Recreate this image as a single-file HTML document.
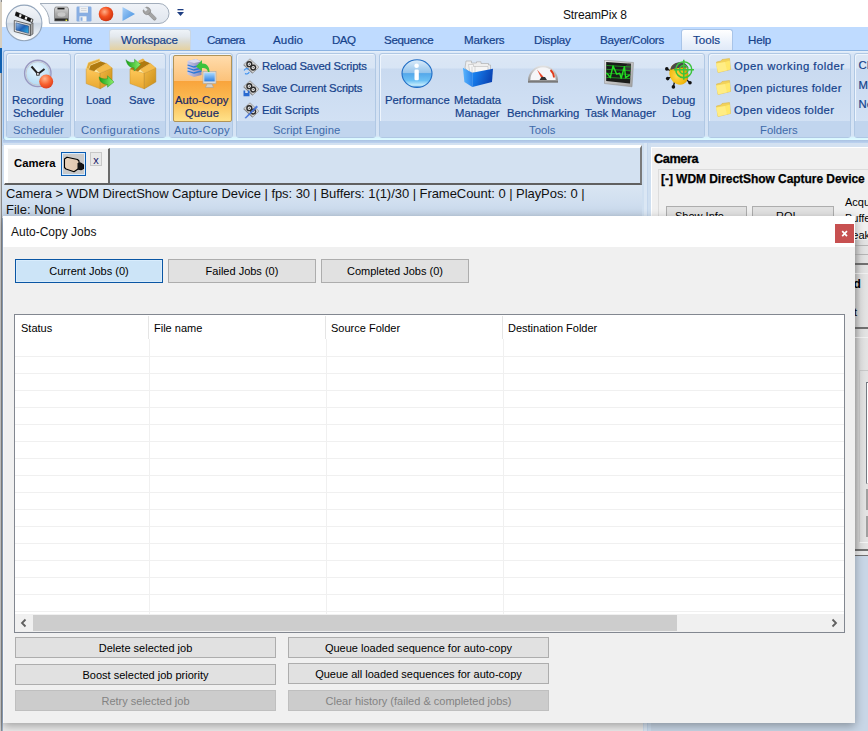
<!DOCTYPE html>
<html><head><meta charset="utf-8">
<style>
*{margin:0;padding:0;box-sizing:border-box}
html,body{width:868px;height:731px;overflow:hidden;background:#c8d6e6;font-family:"Liberation Sans",sans-serif}
.a{position:absolute}
.t{position:absolute;white-space:nowrap;line-height:1}
.rb{color:#15428b}
.tab{font-size:11.6px;color:#15428b;-webkit-text-stroke:0.2px #15428b}
.grp{position:absolute;top:53px;height:85px;border:1px solid #b0c8e4;border-radius:3px;background:linear-gradient(#dce7f5 0,#d8e5f5 14px,#c9daf0 15px,#d2e1f4 68px);box-shadow:inset 1px 1px 0 #eef5fd}
.grp .lb{position:absolute;left:0;right:0;bottom:0;height:16px;background:#c1d5ee}
.gl{position:absolute;font-size:11.3px;color:#3e6aaa;white-space:nowrap;line-height:1}
.bt{position:absolute;font-size:11.3px;color:#15428b;white-space:nowrap;line-height:1;-webkit-text-stroke:0.2px #15428b}
.btn{position:absolute;height:21px;border:1px solid #adadad;background:#e1e1e1;font-size:11px;color:#000;text-align:center;line-height:21px;white-space:nowrap}
.dis{border-color:#bfbfbf;background:#cccccc;color:#838383}
</style></head><body>
<!-- left strip behind -->
<div class="a" style="left:0;top:0;width:2px;height:731px;background:#cfcfcf;border-right:1px solid #8a8a8a"></div>
<div class="a" style="left:0;top:2px;width:2px;height:46px;background:#d8cfc0"></div>
<div class="a" style="left:0;top:48px;width:2px;height:25px;background:#1060b0"></div>
<div class="a" style="left:2px;top:27px;width:1px;height:704px;background:#c0d8f4"></div>
<div class="a" style="left:2px;top:217px;width:1px;height:514px;background:#9ab0cc"></div>

<!-- title bar -->
<div class="a" style="left:2px;top:0;width:866px;height:27px;background:#fff"></div>
<!-- tab row -->
<div class="a" style="left:2px;top:27px;width:866px;height:24px;background:#bfdbff"></div>


<!-- QAT -->
<svg class="a" style="left:36px;top:2px" width="140" height="24">
  <defs><linearGradient id="qg" x1="0" y1="0" x2="0" y2="1"><stop offset="0" stop-color="#f0f3f8"/><stop offset="1" stop-color="#e0e6ee"/></linearGradient></defs>
  <path d="M4,1.5 H123 A10,10 0 0 1 123,21.5 H13.5 A25.2,25.2 0 0 0 4,1.5 Z" fill="url(#qg)" stroke="#a2adbb" stroke-width="1"/>
</svg>
<!-- hdd icon -->
<svg class="a" style="left:54px;top:6px" width="16" height="16">
  <defs><linearGradient id="hdg" x1="0" y1="0" x2="0" y2="1"><stop offset="0" stop-color="#d8d8d8"/><stop offset="0.5" stop-color="#a8a8a8"/><stop offset="1" stop-color="#8c8c8c"/></linearGradient></defs>
  <path d="M1.5,1 H13.5 L14.5,3 V15 H0.5 V3 Z" fill="url(#hdg)" stroke="#6a6a6a" stroke-width="0.6"/>
  <rect x="3.5" y="1.8" width="7" height="1.6" fill="#222"/>
  <ellipse cx="7.5" cy="8.5" rx="4" ry="2.2" fill="#c8c8c8"/>
  <rect x="1" y="12.5" width="13" height="2.2" fill="#2a2a2a"/>
  <rect x="11.5" y="13.6" width="1.6" height="1.4" fill="#f0f040"/>
</svg>
<!-- floppy -->
<svg class="a" style="left:76px;top:6px" width="16" height="16">
  <rect x="0.5" y="0.5" width="15" height="15" rx="1.2" fill="#88aee2"/>
  <rect x="3.5" y="0.5" width="8.5" height="6.2" fill="#eef0f2"/>
  <path d="M5,2.5 H10.5 M5,4.5 H10.5" stroke="#c8ccd2" stroke-width="0.7"/>
  <rect x="3.5" y="10.3" width="7" height="5.2" fill="#f4f4f4"/>
  <rect x="4.5" y="11.3" width="2" height="3.5" fill="#88aee2"/>
</svg>
<!-- record -->
<svg class="a" style="left:98px;top:6px" width="16" height="16">
  <defs><radialGradient id="rg" cx="0.4" cy="0.35" r="0.7"><stop offset="0" stop-color="#ffb08a"/><stop offset="0.5" stop-color="#f3501f"/><stop offset="1" stop-color="#c9300e"/></radialGradient></defs>
  <circle cx="8" cy="8" r="7.3" fill="url(#rg)"/>
</svg>
<!-- play -->
<svg class="a" style="left:121px;top:6px" width="16" height="16">
  <defs><linearGradient id="plg" x1="0" y1="0" x2="1" y2="1"><stop offset="0" stop-color="#a8d0f8"/><stop offset="1" stop-color="#3f8ee0"/></linearGradient></defs>
  <path d="M1.5,1 L14,8 L1.5,15 Z" fill="url(#plg)"/>
</svg>
<!-- wrench -->
<svg class="a" style="left:142px;top:6px" width="16" height="16">
  <g transform="rotate(45 8 8)">
    <rect x="4.5" y="6.4" width="11.5" height="3.2" rx="1.6" fill="#a4a4a4" stroke="#7c7c7c" stroke-width="0.5"/>
    <circle cx="3.6" cy="8" r="3.7" fill="#a4a4a4" stroke="#7c7c7c" stroke-width="0.5"/>
    <rect x="-1" y="6.6" width="4.2" height="2.8" fill="#e6ebf1"/>
  </g>
</svg>
<!-- dropdown arrow -->
<svg class="a" style="left:177px;top:9px" width="8" height="9">
  <rect x="0.5" y="0" width="6" height="1.3" fill="#1e3e82"/>
  <path d="M0,3 H7 L3.5,7 Z" fill="#1e3e82"/>
</svg>
<!-- orb -->
<svg class="a" style="left:4px;top:3px" width="42" height="42">
  <defs>
    <linearGradient id="og" x1="0" y1="0" x2="0" y2="1"><stop offset="0" stop-color="#f6f8fb"/><stop offset="0.48" stop-color="#dfe6ee"/><stop offset="0.52" stop-color="#ccd6e2"/><stop offset="0.8" stop-color="#e8eef4"/><stop offset="1" stop-color="#ffffff"/></linearGradient>
    <linearGradient id="scr" x1="0" y1="0" x2="1" y2="1"><stop offset="0" stop-color="#a0c4ec"/><stop offset="0.5" stop-color="#1f5fb4"/><stop offset="1" stop-color="#30b8e8"/></linearGradient>
    <linearGradient id="cbody" x1="0" y1="0" x2="1" y2="0"><stop offset="0" stop-color="#f4f4f4"/><stop offset="1" stop-color="#c8c8c8"/></linearGradient>
  </defs>
  <circle cx="20.1" cy="19.9" r="17.8" fill="url(#og)" stroke="#94a6bc" stroke-width="1.1"/>
  <path d="M12.2,8.9 L29,16.5 L28.1,19.5 L11.3,12.5 Z" fill="#f0f0f0" stroke="#222" stroke-width="0.8"/>
  <path d="M12.2,8.9 L15.8,10.5 L14.8,14 L11.3,12.5 Z M17.8,11.4 L21.5,13.1 L20.4,16.4 L16.7,14.9 Z M23.6,14 L27.2,15.7 L26.2,18.8 L22.5,17.3 Z" fill="#111"/>
  <path d="M26.3,21.5 L29,19.8 L29,31 L26.3,32.7 Z" fill="#a8a8a8" stroke="#444" stroke-width="0.6"/>
  <path d="M10.3,17.5 L26.3,21.5 L26.3,32.7 L10.3,28.5 Z" fill="url(#cbody)" stroke="#444" stroke-width="0.8"/>
  <path d="M11.9,19.8 L24.5,23 L24.5,30.3 L11.9,27 Z" fill="url(#scr)" stroke="#1a3a6a" stroke-width="0.5"/>
</svg>
<!-- title -->
<div class="t" style="left:563px;top:9px;font-size:12px;color:#111;letter-spacing:-0.15px">StreamPix 8</div>

<!-- tabs -->
<div class="a" style="left:109px;top:29px;width:82px;height:22px;border:1px solid #c9d6e4;border-bottom:none;border-radius:3px 3px 0 0;background:linear-gradient(#eef3f8 0,#e4e9ee 30%,#dcdcd4 55%,#e6d09a 100%)"></div>
<div class="a" style="left:681px;top:29px;width:52px;height:22px;border:1px solid #a8c4e8;border-bottom:none;border-radius:3px 3px 0 0;background:linear-gradient(#ffffff 0,#eaf1fb 60%,#dfe9f7 100%)"></div>
<div class="t tab" style="left:63px;top:34px;letter-spacing:-0.5px">Home</div>
<div class="t tab" style="left:121px;top:34px;letter-spacing:-0.1px">Workspace</div>
<div class="t tab" style="left:207px;top:34px;letter-spacing:-0.6px">Camera</div>
<div class="t tab" style="left:273px;top:34px;letter-spacing:0.1px">Audio</div>
<div class="t tab" style="left:332px;top:34px;letter-spacing:-0.6px">DAQ</div>
<div class="t tab" style="left:384px;top:34px;letter-spacing:-0.35px">Sequence</div>
<div class="t tab" style="left:464px;top:34px;letter-spacing:-0.2px">Markers</div>
<div class="t tab" style="left:534px;top:34px;letter-spacing:-0.2px">Display</div>
<div class="t tab" style="left:600px;top:34px;letter-spacing:-0.25px">Bayer/Colors</div>
<div class="t tab" style="left:693px;top:34px;letter-spacing:0px">Tools</div>
<div class="t tab" style="left:748px;top:34px;letter-spacing:-0.2px">Help</div>

<!-- ribbon outer panel -->
<div class="a" style="left:3px;top:50px;width:870px;height:90px;border-top:1px solid #8db4e2;border-left:1px solid #8db4e2;border-radius:3px 0 0 3px;background:linear-gradient(#e6f0fb 0,#d7e4f5 3px,#d3e1f3 60%,#d6e4f5 85px,#d8f8ff 87px,#e4fcff 90px)"></div>
<div class="a" style="left:3px;top:140px;width:865px;height:3px;background:linear-gradient(#aac2e2,#bcd2f0)"></div>
<div class="a" style="left:3px;top:143px;width:865px;height:5px;background:#d3e1f1"></div>
<!-- groups -->
<div class="grp" style="left:6px;width:65px"><div class="lb"></div></div>
<div class="grp" style="left:74px;width:92px"><div class="lb"></div></div>
<div class="grp" style="left:169px;width:64px"><div class="lb"></div></div>
<div class="grp" style="left:236px;width:140px"><div class="lb"></div></div>
<div class="grp" style="left:379px;width:326px"><div class="lb"></div></div>
<div class="grp" style="left:708px;width:143px"><div class="lb"></div></div>
<div class="grp" style="left:854px;width:30px"><div class="lb"></div></div>
<!-- group labels -->
<div class="gl" style="left:13px;top:125px">Scheduler</div>
<div class="gl" style="left:81px;top:125px;letter-spacing:0.45px">Configurations</div>
<div class="gl" style="left:174px;top:125px;letter-spacing:0.3px">Auto-Copy</div>
<div class="gl" style="left:273px;top:125px">Script Engine</div>
<div class="gl" style="left:529px;top:125px">Tools</div>
<div class="gl" style="left:760px;top:125px">Folders</div>
<!-- auto-copy highlighted button -->
<div class="a" style="left:173px;top:55px;width:59px;height:67px;border:1px solid #b09458;border-radius:2px;background:linear-gradient(#ffdcac 0,#fcc27a 38%,#f9a43c 39%,#fbbd55 70%,#ffe28a 100%)"></div>
<!-- large button texts -->
<div class="bt" style="left:12px;top:95px">Recording</div>
<div class="bt" style="left:13px;top:108px">Scheduler</div>
<div class="bt" style="left:86px;top:95px">Load</div>
<div class="bt" style="left:129px;top:95px">Save</div>
<div class="bt" style="left:175px;top:95px;color:#221a55">Auto-Copy</div>
<div class="bt" style="left:185px;top:108px;color:#221a55">Queue</div>
<div class="bt" style="left:385px;top:95px">Performance</div>
<div class="bt" style="left:454px;top:95px">Metadata</div>
<div class="bt" style="left:455px;top:108px">Manager</div>
<div class="bt" style="left:532px;top:95px">Disk</div>
<div class="bt" style="left:507px;top:108px">Benchmarking</div>
<div class="bt" style="left:596px;top:95px">Windows</div>
<div class="bt" style="left:585px;top:108px">Task Manager</div>
<div class="bt" style="left:662px;top:95px">Debug</div>
<div class="bt" style="left:672px;top:108px">Log</div>
<!-- small button texts -->
<div class="bt" style="left:262px;top:61px;letter-spacing:-0.2px">Reload Saved Scripts</div>
<div class="bt" style="left:262px;top:83px;letter-spacing:-0.2px">Save Current Scripts</div>
<div class="bt" style="left:262px;top:105px">Edit Scripts</div>
<div class="bt" style="left:734px;top:61px;letter-spacing:0.5px">Open working folder</div>
<div class="bt" style="left:734px;top:83px;letter-spacing:0.3px">Open pictures folder</div>
<div class="bt" style="left:734px;top:105px;letter-spacing:0.3px">Open videos folder</div>
<div class="bt" style="left:858.5px;top:59.5px">CPU</div>
<div class="bt" style="left:858.5px;top:79.5px">Mem</div>
<div class="bt" style="left:858.5px;top:99px">Net</div>


<!-- ===== ribbon icons ===== -->
<svg class="a" style="left:22px;top:57px" width="34" height="34">
  <defs>
    <radialGradient id="cf" cx="0.45" cy="0.35" r="0.7"><stop offset="0" stop-color="#e8f6ff"/><stop offset="1" stop-color="#a9d6f2"/></radialGradient>
    <radialGradient id="rd" cx="0.4" cy="0.3" r="0.75"><stop offset="0" stop-color="#ffb58c"/><stop offset="0.55" stop-color="#f8612e"/><stop offset="1" stop-color="#d8381a"/></radialGradient>
  </defs>
  <circle cx="15.8" cy="16.4" r="13.2" fill="url(#cf)" stroke="#9a98c0" stroke-width="1.4"/>
  <circle cx="15.8" cy="16.4" r="11.8" fill="none" stroke="#c7c7cf" stroke-width="1"/>
  <path d="M9.5,9.5 L16,17 L22.5,12" fill="none" stroke="#222" stroke-width="2"/>
  <rect x="14.6" y="15.6" width="2.6" height="2.6" fill="#ddd" stroke="#222" stroke-width="0.8"/>
  <circle cx="24.2" cy="24.6" r="7" fill="url(#rd)"/>
</svg>
<!-- load box -->
<svg class="a" style="left:84px;top:57px" width="32" height="34">
  <defs>
    <linearGradient id="bxl" x1="0" y1="0" x2="0" y2="1"><stop offset="0" stop-color="#ffc85a"/><stop offset="1" stop-color="#e8a830"/></linearGradient>
    <linearGradient id="bxr" x1="0" y1="0" x2="1" y2="1"><stop offset="0" stop-color="#f2b846"/><stop offset="1" stop-color="#c88c14"/></linearGradient>
    <linearGradient id="gar" x1="0" y1="0" x2="1" y2="0"><stop offset="0" stop-color="#16a016"/><stop offset="1" stop-color="#90f070"/></linearGradient>
  </defs>
  <path d="M2.2,11.5 L16.2,16.2 L16.2,31.8 L2.2,26.6 Z" fill="url(#bxl)" stroke="#c89028" stroke-width="0.5"/>
  <path d="M16.2,16.2 L28.1,11 L28.1,25 L16.2,31.8 Z" fill="url(#bxr)" stroke="#b88018" stroke-width="0.5"/>
  <path d="M4.8,12.3 L6.2,8.2 L16.2,4.2 L22.4,6.3 L12,12.5 L16.2,16.2 Z" fill="#b07a10"/>
  <path d="M12,12.5 L22.4,6.3 L28.1,11 L16.2,16.2 Z" fill="#f4bc4c" stroke="#d89a28" stroke-width="0.4"/>
  <path d="M2.2,11.5 L4.2,5.5 L15.5,1.8 L16.2,4.2 L6.2,8.2 L4.8,12.3 Z" fill="#e2aa3a" stroke="#ffe8a0" stroke-width="0.5"/>
  <path d="M12,12.5 L16.2,16.2 L10,14.5 Z" fill="#ffe8a0"/>
  <path d="M15.1,19.8 C15.5,24.5 18,27.2 23.5,27.5 L23.5,30.2 L30,25 L23.5,18.8 L23.5,21.8 C19.5,22.2 16.8,21.5 15.1,19.8 Z" fill="url(#gar)" stroke="#1a8a1a" stroke-width="0.4"/>
</svg>
<!-- save box -->
<svg class="a" style="left:125px;top:57px" width="34" height="34">
  <path d="M5,12 L19.3,16.2 L19.3,31.8 L5,26.6 Z" fill="url(#bxl)" stroke="#c89028" stroke-width="0.5"/>
  <path d="M19.3,16.2 L30.8,11 L30.8,25 L19.3,31.8 Z" fill="url(#bxr)" stroke="#b88018" stroke-width="0.5"/>
  <path d="M5,12 L8.5,8.5 L14,5.5 L19.3,3.7 L25.3,6.3 L15.2,12.5 L19.3,16.2 Z" fill="#b07a10"/>
  <path d="M15.2,12.5 L25.3,6.3 L30.8,11 L19.3,16.2 Z" fill="#f4bc4c" stroke="#d89a28" stroke-width="0.4"/>
  <path d="M13,4 L18,1.6 L20,3.5 L14.5,6 Z" fill="#e8b040"/>
  <path d="M15.2,12.5 L19.3,16.2 L13,14.5 Z" fill="#ffe8a0"/>
  <path d="M0.9,2.7 C2,8 5,10.8 9.2,10.8 L9.2,14.1 L15.7,7.6 L9.5,2.2 L9.5,5.5 C6,5.8 3,5 0.9,2.7 Z" fill="url(#gar)" stroke="#1a8a1a" stroke-width="0.4"/>
</svg>
<!-- auto copy icon -->
<svg class="a" style="left:186px;top:58px" width="32" height="32">
  <defs>
    <linearGradient id="srv" x1="0" y1="0" x2="1" y2="0"><stop offset="0" stop-color="#c8c8e8"/><stop offset="1" stop-color="#8888b8"/></linearGradient>
    <linearGradient id="mon" x1="0" y1="0" x2="0" y2="1"><stop offset="0" stop-color="#a8d8ff"/><stop offset="1" stop-color="#2f7fe0"/></linearGradient>
  </defs>
  <path d="M1.5,3 L10,1 L15.5,3.5 L15.5,17 L8,19 L1.5,16.5 Z" fill="url(#srv)"/>
  <path d="M1.5,3 L10,1 L15.5,3.5 L8,5 Z" fill="#dcdcf0"/>
  <path d="M1.5,7 L8,9 L15.5,7 M1.5,10 L8,12 L15.5,10 M1.5,13 L8,15 L15.5,13" fill="none" stroke="#2a78d8" stroke-width="1.3"/>
  <rect x="17" y="13.5" width="13" height="12" fill="#dcdcdc" stroke="#a8a8a8" stroke-width="0.6"/>
  <rect x="18.3" y="14.8" width="10.4" height="8.6" fill="url(#mon)"/>
  <path d="M21,26 L26,26 L27.5,29.5 L19.5,29.5 Z" fill="#d0d0d0" stroke="#999" stroke-width="0.5"/>
  <path d="M23.5,14 C23.5,8 20,5 16,5.5 L16,2 L10,8.5 L16,13 L16,10 C19,9.5 21.5,11 22,14 Z" fill="#3cc23c"/>
</svg>
<!-- script icons -->
<svg class="a" style="left:243px;top:58px" width="17" height="17">
  <path d="M0.8,6.5 L7,0.8 L16,9.2 L9.8,15 Z" fill="#d4d4d4" stroke="#8c8c8c" stroke-width="0.7"/>
  <path d="M0.8,6.5 L9.8,15 L9.3,15.6 L0.5,7.3 Z" fill="#7a7a7a"/>
  <circle cx="6.3" cy="6.2" r="2.4" fill="#eee" stroke="#2a2a2a" stroke-width="1.4"/>
  <circle cx="10.2" cy="9.6" r="2.4" fill="#eee" stroke="#2a2a2a" stroke-width="1.4"/>
  <circle cx="6.3" cy="6.2" r="0.7" fill="#555"/><circle cx="10.2" cy="9.6" r="0.7" fill="#555"/>
  <path d="M1.2,12.5 A2.8,2.8 0 0 1 5.5,11.2 M6.2,14 A2.8,2.8 0 0 1 2,15.5" fill="none" stroke="#3a90f0" stroke-width="1.1"/>
</svg>
<svg class="a" style="left:243px;top:80px" width="17" height="17">
  <path d="M0.8,6.5 L7,0.8 L16,9.2 L9.8,15 Z" fill="#d4d4d4" stroke="#8c8c8c" stroke-width="0.7"/>
  <path d="M0.8,6.5 L9.8,15 L9.3,15.6 L0.5,7.3 Z" fill="#7a7a7a"/>
  <circle cx="6.3" cy="6.2" r="2.4" fill="#eee" stroke="#2a2a2a" stroke-width="1.4"/>
  <circle cx="10.2" cy="9.6" r="2.4" fill="#eee" stroke="#2a2a2a" stroke-width="1.4"/>
  <circle cx="6.3" cy="6.2" r="0.7" fill="#555"/><circle cx="10.2" cy="9.6" r="0.7" fill="#555"/>
  <path d="M0.5,10.5 H2.2 V13 H4.8 V10.5 H6.5 V16.2 H0.5 Z" fill="#2a6ad0"/>
</svg>
<svg class="a" style="left:243px;top:102px" width="17" height="17">
  <path d="M0.8,6.5 L7,0.8 L16,9.2 L9.8,15 Z" fill="#d4d4d4" stroke="#8c8c8c" stroke-width="0.7"/>
  <path d="M0.8,6.5 L9.8,15 L9.3,15.6 L0.5,7.3 Z" fill="#7a7a7a"/>
  <circle cx="6.3" cy="6.2" r="2.4" fill="#eee" stroke="#2a2a2a" stroke-width="1.4"/>
  <circle cx="10.2" cy="9.6" r="2.4" fill="#eee" stroke="#2a2a2a" stroke-width="1.4"/>
  <circle cx="6.3" cy="6.2" r="0.7" fill="#555"/><circle cx="10.2" cy="9.6" r="0.7" fill="#555"/>
  <path d="M1.5,16 L13.5,3.5 L15,5 L3,16.5 Z" fill="#3f6fd8" opacity="0.9"/>
</svg>
<!-- info -->
<svg class="a" style="left:401px;top:58px" width="32" height="32">
  <defs>
    <linearGradient id="inf" x1="0" y1="0" x2="0" y2="1"><stop offset="0" stop-color="#dcecfa"/><stop offset="0.47" stop-color="#94c4ec"/><stop offset="0.5" stop-color="#54a8ea"/><stop offset="0.75" stop-color="#6cc0f4"/><stop offset="0.92" stop-color="#c4ecfc"/><stop offset="1" stop-color="#3a8ad8"/></linearGradient>
  </defs>
  <ellipse cx="16" cy="15.6" rx="15" ry="13.8" fill="url(#inf)" stroke="#1f6cc4" stroke-width="1.1"/>
  <circle cx="15.6" cy="7.8" r="2.3" fill="#fff"/>
  <rect x="13.5" y="11.5" width="4.3" height="10.8" rx="1.2" fill="#fff"/>
</svg>
<!-- metadata -->
<svg class="a" style="left:462px;top:59px" width="32" height="30">
  <defs>
    <linearGradient id="tray" x1="0" y1="0" x2="1" y2="0.3"><stop offset="0" stop-color="#1a8af8"/><stop offset="1" stop-color="#0a44b4"/></linearGradient>
    <linearGradient id="trl" x1="0" y1="0" x2="1" y2="0"><stop offset="0" stop-color="#5ab4fc"/><stop offset="1" stop-color="#2a84ec"/></linearGradient>
  </defs>
  <path d="M4,2 H9.5 V4 H14.5 V2.8 H19 V4.5 H26.5 V6 H28.5 V12 L8,14 L3,9 Z" fill="#eeeeee" stroke="#a8a8a8" stroke-width="0.6"/>
  <path d="M6.5,5.5 H11.5 V7.5 H26 V13 L8,14 Z" fill="#f6f6f6" stroke="#b0b0b0" stroke-width="0.5"/>
  <path d="M10,7.5 V14 M13,7 V13.5" stroke="#c4c4c4" stroke-width="0.6"/>
  <path d="M0.9,8.8 L10.3,13.7 L10.3,28 L2.4,23.1 Z" fill="url(#trl)"/>
  <path d="M10.3,13.7 L31,9.8 L30,23.1 L10.3,28 Z" fill="url(#tray)"/>
</svg>
<!-- gauge -->
<svg class="a" style="left:527px;top:64px" width="32" height="20">
  <defs><linearGradient id="gr" x1="0" y1="0" x2="0" y2="1"><stop offset="0" stop-color="#e4e4e4"/><stop offset="1" stop-color="#8c8c8c"/></linearGradient></defs>
  <path d="M1,16.5 A15,15 0 0 1 31,16.5 V18.5 H1 Z" fill="url(#gr)"/>
  <path d="M3.3,16 A12.7,12.7 0 0 1 28.7,16 Z" fill="#f6f6f8"/>
  <path d="M23.5,6 A11,11 0 0 1 27,13.5" fill="none" stroke="#e03a1a" stroke-width="1.8"/>
  <path d="M10,5.5 L17.5,14 L15,15.5 Z" fill="#e8482a"/>
  <path d="M12.5,16 L20,16 L18,13 L14.5,13 Z" fill="#333"/>
  <rect x="1" y="17" width="30" height="1.5" fill="#7a7a7a"/>
</svg>
<!-- windows task manager monitor -->
<svg class="a" style="left:604px;top:60px" width="32" height="28">
  <defs><linearGradient id="bez" x1="0" y1="0" x2="1" y2="1"><stop offset="0" stop-color="#e8e8e8"/><stop offset="1" stop-color="#a0a0a0"/></linearGradient></defs>
  <path d="M0.4,0.2 L29.5,2.5 L28,26.8 L0.5,23.5 Z" fill="url(#bez)" stroke="#8a8a8a" stroke-width="0.5"/>
  <path d="M2.2,1.9 L27,3.8 L26,23.6 L2.2,21 Z" fill="#1a1c1a"/>
  <path d="M24,3.6 L27,3.8 L26.6,12 L17,10 Z" fill="#4a4a4a" opacity="0.6"/>
  <path d="M2.2,5.4 L26.8,7 M2.2,9.3 L26.6,10.6 M2.2,13.2 L26.4,14.5 M2.2,17.4 L26.2,18.6" stroke="#1f9a1f" stroke-width="0.9"/>
  <path d="M2.2,13 L4,14.5 L6.3,17.7 L9,5.9 L12.7,14.2 L15.7,13.2 L17.2,18.2 L20.4,6.6 L21.6,17.7 L25.6,15.2" fill="none" stroke="#22e022" stroke-width="1.4" stroke-linejoin="round"/>
</svg>
<!-- debug -->
<svg class="a" style="left:664px;top:58px" width="32" height="32">
  <defs><radialGradient id="bug" cx="0.35" cy="0.55" r="0.7"><stop offset="0" stop-color="#ffd84a"/><stop offset="0.6" stop-color="#f2b80e"/><stop offset="1" stop-color="#c08a06"/></radialGradient></defs>
  <path d="M3,11 L7,13 M3.8,20.5 L7,19 M9.4,28.5 L10.5,24 M25.5,24.5 L22,21" stroke="#111" stroke-width="1.3"/>
  <circle cx="2.8" cy="10.9" r="1.8" fill="#111"/><circle cx="3.7" cy="20.6" r="1.8" fill="#111"/><circle cx="9.4" cy="28.9" r="1.8" fill="#111"/><circle cx="26" cy="24.7" r="1.8" fill="#111"/>
  <ellipse cx="14.9" cy="16" rx="9.3" ry="11" transform="rotate(-25 14.9 16)" fill="url(#bug)"/>
  <path d="M6.5,12 C7,6 13,3.5 19,4.5 C22,5.5 24,8 24.5,10 C19,9 11,10 6.5,12 Z" fill="#4a4a4a"/>
  <circle cx="19.8" cy="11.7" r="8" fill="none" stroke="#3cc43c" stroke-width="1.5"/>
  <circle cx="19.8" cy="11.7" r="4.2" fill="none" stroke="#3cc43c" stroke-width="1.5"/>
  <path d="M19.8,1.8 V21.8 M9.8,11.7 H30" stroke="#3cc43c" stroke-width="1.5"/>
</svg>
<!-- folders -->
<svg class="a" style="left:715px;top:58px" width="17" height="16">
  <path d="M1.5,4 L6,3 L7,1.5 L14.5,0.5 L15.5,11.5 L3,14.5 Z" fill="#f2d25a" stroke="#d8b040" stroke-width="0.5"/>
  <path d="M1,5.5 L10,4 L14.8,2.5 L15.5,11.5 L3,14.5 Z" fill="#ffe86a"/>
  <path d="M1,5.5 L10,4 L12,12.5 L3,14.5 Z" fill="#fff2a0" opacity="0.5"/>
</svg>
<svg class="a" style="left:715px;top:80px" width="17" height="16">
  <path d="M1.5,4 L6,3 L7,1.5 L14.5,0.5 L15.5,11.5 L3,14.5 Z" fill="#f2d25a" stroke="#d8b040" stroke-width="0.5"/>
  <path d="M1,5.5 L10,4 L14.8,2.5 L15.5,11.5 L3,14.5 Z" fill="#ffe86a"/>
  <path d="M1,5.5 L10,4 L12,12.5 L3,14.5 Z" fill="#fff2a0" opacity="0.5"/>
</svg>
<svg class="a" style="left:715px;top:102px" width="17" height="16">
  <path d="M1.5,4 L6,3 L7,1.5 L14.5,0.5 L15.5,11.5 L3,14.5 Z" fill="#f2d25a" stroke="#d8b040" stroke-width="0.5"/>
  <path d="M1,5.5 L10,4 L14.8,2.5 L15.5,11.5 L3,14.5 Z" fill="#ffe86a"/>
  <path d="M1,5.5 L10,4 L12,12.5 L3,14.5 Z" fill="#fff2a0" opacity="0.5"/>
</svg>



<!-- ===== document area ===== -->
<div class="a" style="left:2px;top:146px;width:646px;height:72px;background:#d3e1f1"></div>
<!-- tabstrip box -->
<div class="a" style="left:4px;top:145px;width:638px;height:40px;border-top:3px solid #fff;border-left:1px solid #fff;border-right:2px solid #7a7a7a;border-bottom:2px solid #606060;background:#d3e1f1"></div>
<div class="a" style="left:5px;top:148px;width:105px;height:35px;border-left:3px solid #fff;border-top:1px solid #fafafa;border-right:2px solid #6a6a6a;background:#f0f0f0"></div>
<div class="t" style="left:14px;top:158px;font-size:11.3px;font-weight:bold;color:#000">Camera</div>
<div class="a" style="left:61px;top:152px;width:25px;height:24px;border:1px solid #0a5bb0;background:#c9c9c9;box-shadow:inset 0 0 0 1px #d8ecff"></div>
<!-- camera icon in tab -->
<svg class="a" style="left:62px;top:153px" width="23" height="22">
  <defs><linearGradient id="cam" x1="0" y1="0" x2="1" y2="0"><stop offset="0" stop-color="#e8d2bc"/><stop offset="0.7" stop-color="#e0c8b0"/><stop offset="1" stop-color="#6a5a4a"/></linearGradient></defs>
  <path d="M2.5,6 L5,4.2 L15.5,6.5 L17,8 L17,10 L18.5,10 L21.5,12 L21.5,15.5 L19,16.8 L16,16 L12,18.8 L4,16 L2.5,14.5 Z" fill="url(#cam)" stroke="#000" stroke-width="1.1" stroke-linejoin="round"/>
  <path d="M15.5,10 L18.5,10 L21.5,12 L21.5,15.5 L19,16.8 L15.5,16 Z" fill="#151515"/>
</svg>
<div class="a" style="left:90px;top:152px;width:12px;height:14px;border:1px solid #c8c8c8;background:#e8e8e8;font-size:11px;line-height:14px;text-align:center;color:#1a1a6a">x</div>
<!-- status bar -->
<div class="a" style="left:2px;top:185px;width:641px;height:32px;background:linear-gradient(#dae6f3,#cfdeef 60%,#c3d3e6)"></div>
<div class="t" style="left:6px;top:187px;font-size:13px;color:#111;letter-spacing:-0.05px">Camera &gt; WDM DirectShow Capture Device | fps: 30 | Buffers: 1(1)/30 | FrameCount: 0 | PlayPos: 0 |</div>
<div class="t" style="left:6px;top:203px;font-size:13px;color:#111">File: None |</div>
<!-- splitter -->
<div class="a" style="left:642px;top:143px;width:9px;height:588px;background:#cfdff0"></div>
<div class="a" style="left:644px;top:143px;width:3px;height:588px;background:#dbe7f4"></div>
<div class="a" style="left:647px;top:143px;width:1px;height:588px;background:#c4d6ec"></div>
<!-- right panel -->
<div class="a" style="left:651px;top:147px;width:217px;height:401px;background:#f0f0f0;border-left:1px solid #fff;border-top:1px solid #fff"></div>
<div class="t" style="left:654px;top:152.5px;font-size:12.7px;font-weight:bold;color:#000;letter-spacing:-0.4px;-webkit-text-stroke:0.3px #000">Camera</div>
<div class="a" style="left:658px;top:169px;width:210px;height:380px;border-top:1px solid #dcdcdc;border-left:1px solid #dcdcdc"></div>
<div class="t" style="left:661px;top:173px;font-size:12px;font-weight:bold;color:#000;letter-spacing:-0.05px;-webkit-text-stroke:0.25px #000">[-] WDM DirectShow Capture Device</div>
<div class="a" style="left:666px;top:206px;width:81px;height:20px;border:1px solid #adadad;background:#e1e1e1"></div>
<div class="a" style="left:752px;top:206px;width:82px;height:20px;border:1px solid #adadad;background:#e1e1e1"></div>
<div class="t" style="left:675px;top:211px;font-size:11px;color:#000">Show Info</div>
<div class="t" style="left:776px;top:211px;font-size:11px;color:#000">ROI</div>
<div class="t" style="left:845px;top:197px;font-size:11px;color:#000">Acqu</div>
<div class="t" style="left:845px;top:213px;font-size:11px;color:#000">Buffe</div>
<div class="t" style="left:845px;top:230px;font-size:11px;color:#000">Peak</div>
<!-- right strip stuff beyond dialog -->
<div class="a" style="left:855px;top:240px;width:13px;height:316px;background:linear-gradient(90deg,#c4c4c4,#dedede 6px,#e4e4e4)"></div>
<div class="a" style="left:855px;top:245px;width:13px;height:1px;background:#b4b4b4"></div>
<div class="a" style="left:855px;top:254px;width:13px;height:1px;background:#b4b4b4"></div>
<div class="a" style="left:855px;top:263px;width:13px;height:2px;background:#707070"></div>
<div class="a" style="left:855px;top:273px;width:13px;height:1px;background:#f0f0f0"></div>
<div class="t" style="left:853.5px;top:278px;font-size:12px;font-weight:bold;color:#000">d</div>
<div class="t" style="left:854px;top:307px;font-size:11px;color:#000">t</div>
<div class="a" style="left:855px;top:327px;width:13px;height:2px;background:#707070"></div>
<div class="a" style="left:855px;top:337px;width:13px;height:1px;background:#f0f0f0"></div>
<div class="a" style="left:859px;top:370px;width:9px;height:173px;border-left:1px solid #c8c8c8;border-top:1px solid #c8c8c8;border-bottom:1px solid #f4f4f4"></div>
<div class="a" style="left:866px;top:382px;width:2px;height:102px;border-left:1px solid #747a82;border-top:1px solid #747a82;border-bottom:1px solid #c8c8c8;background:#fff"></div>
<div class="a" style="left:866px;top:489px;width:2px;height:21px;background:#a0a0a0"></div>
<div class="a" style="left:866px;top:516px;width:2px;height:21px;background:#a0a0a0"></div>
<div class="a" style="left:855px;top:549px;width:13px;height:2px;background:#707070"></div>
<div class="a" style="left:855px;top:551px;width:13px;height:4px;background:#e8e8e8"></div>
<div class="a" style="left:855px;top:555px;width:13px;height:1px;background:#707070"></div>
<!-- ===== dialog ===== -->
<div class="a" style="left:3px;top:217px;width:640px;height:514px;background:#ececec"></div>
<div class="a" style="left:3px;top:216px;width:852px;height:507px;background:#f0f0f0;border-left:1px solid #f6f6f6;box-shadow:0 3px 9px rgba(0,0,0,0.32)"></div>
<div class="a" style="left:3px;top:216px;width:852px;height:31px;background:#fff"></div>
<div class="t" style="left:11px;top:226px;font-size:12px;color:#111">Auto-Copy Jobs</div>
<div class="a" style="left:835px;top:224px;width:19px;height:19px;background:#c75050"></div>
<svg class="a" style="left:835px;top:224px" width="19" height="19"><path d="M7.2,7.2 L12,12.2 M12,7.2 L7.2,12.2" stroke="#fff" stroke-width="1.7"/></svg>
<!-- job buttons -->
<div class="btn" style="left:15px;top:259px;width:148px;height:24px;line-height:23px;border-color:#0a56a4;background:#cce4f7;box-shadow:inset 0 0 0 1px #d8ecfc">Current Jobs (0)</div>
<div class="btn" style="left:168px;top:259px;width:148px;height:24px;line-height:23px">Failed Jobs (0)</div>
<div class="btn" style="left:321px;top:259px;width:148px;height:24px;line-height:23px">Completed Jobs (0)</div>
<!-- listview -->
<div class="a" style="left:14px;top:314px;width:831px;height:319px;border:1px solid #828790;background:#fff"></div>
<div class="a" style="left:15px;top:356px;width:829px;height:1px;background:#f0f0f0"></div><div class="a" style="left:15px;top:373px;width:829px;height:1px;background:#f0f0f0"></div><div class="a" style="left:15px;top:390px;width:829px;height:1px;background:#f0f0f0"></div><div class="a" style="left:15px;top:407px;width:829px;height:1px;background:#f0f0f0"></div><div class="a" style="left:15px;top:424px;width:829px;height:1px;background:#f0f0f0"></div><div class="a" style="left:15px;top:441px;width:829px;height:1px;background:#f0f0f0"></div><div class="a" style="left:15px;top:458px;width:829px;height:1px;background:#f0f0f0"></div><div class="a" style="left:15px;top:475px;width:829px;height:1px;background:#f0f0f0"></div><div class="a" style="left:15px;top:492px;width:829px;height:1px;background:#f0f0f0"></div><div class="a" style="left:15px;top:509px;width:829px;height:1px;background:#f0f0f0"></div><div class="a" style="left:15px;top:526px;width:829px;height:1px;background:#f0f0f0"></div><div class="a" style="left:15px;top:543px;width:829px;height:1px;background:#f0f0f0"></div><div class="a" style="left:15px;top:560px;width:829px;height:1px;background:#f0f0f0"></div><div class="a" style="left:15px;top:577px;width:829px;height:1px;background:#f0f0f0"></div><div class="a" style="left:15px;top:594px;width:829px;height:1px;background:#f0f0f0"></div><div class="a" style="left:15px;top:611px;width:829px;height:1px;background:#f0f0f0"></div>
<div class="a" style="left:149px;top:339px;width:1px;height:275px;background:#f0f0f0"></div>
<div class="a" style="left:326px;top:339px;width:1px;height:275px;background:#f0f0f0"></div>
<div class="a" style="left:503px;top:339px;width:1px;height:275px;background:#f0f0f0"></div>
<div class="a" style="left:148px;top:316px;width:1px;height:23px;background:#e5e5e5"></div>
<div class="a" style="left:325px;top:316px;width:1px;height:23px;background:#e5e5e5"></div>
<div class="a" style="left:502px;top:316px;width:1px;height:23px;background:#e5e5e5"></div>
<div class="t" style="left:21px;top:323px;font-size:11px;color:#000">Status</div>
<div class="t" style="left:154px;top:323px;font-size:11px;color:#000">File name</div>
<div class="t" style="left:331px;top:323px;font-size:11px;color:#000">Source Folder</div>
<div class="t" style="left:508px;top:323px;font-size:11px;color:#000">Destination Folder</div>
<!-- hscroll -->
<div class="a" style="left:15px;top:614px;width:829px;height:18px;background:#f0f0f0"></div>
<div class="a" style="left:33px;top:615px;width:644px;height:16px;background:#cdcdcd"></div>
<svg class="a" style="left:19px;top:618px" width="10" height="10"><path d="M6.5,1.5 L3,5 L6.5,8.5" fill="none" stroke="#606060" stroke-width="1.8"/></svg>
<svg class="a" style="left:829px;top:618px" width="10" height="10"><path d="M3.5,1.5 L7,5 L3.5,8.5" fill="none" stroke="#606060" stroke-width="1.8"/></svg>
<!-- bottom buttons -->
<div class="btn" style="left:15px;top:637px;width:261px">Delete selected job</div>
<div class="btn" style="left:15px;top:664px;width:261px">Boost selected job priority</div>
<div class="btn dis" style="left:15px;top:690px;width:261px">Retry selected job</div>
<div class="btn" style="left:288px;top:637px;width:261px">Queue loaded sequence for auto-copy</div>
<div class="btn" style="left:288px;top:663px;width:261px">Queue all loaded sequences for auto-copy</div>
<div class="btn dis" style="left:288px;top:690px;width:261px">Clear history (failed &amp; completed jobs)</div>
</body></html>
